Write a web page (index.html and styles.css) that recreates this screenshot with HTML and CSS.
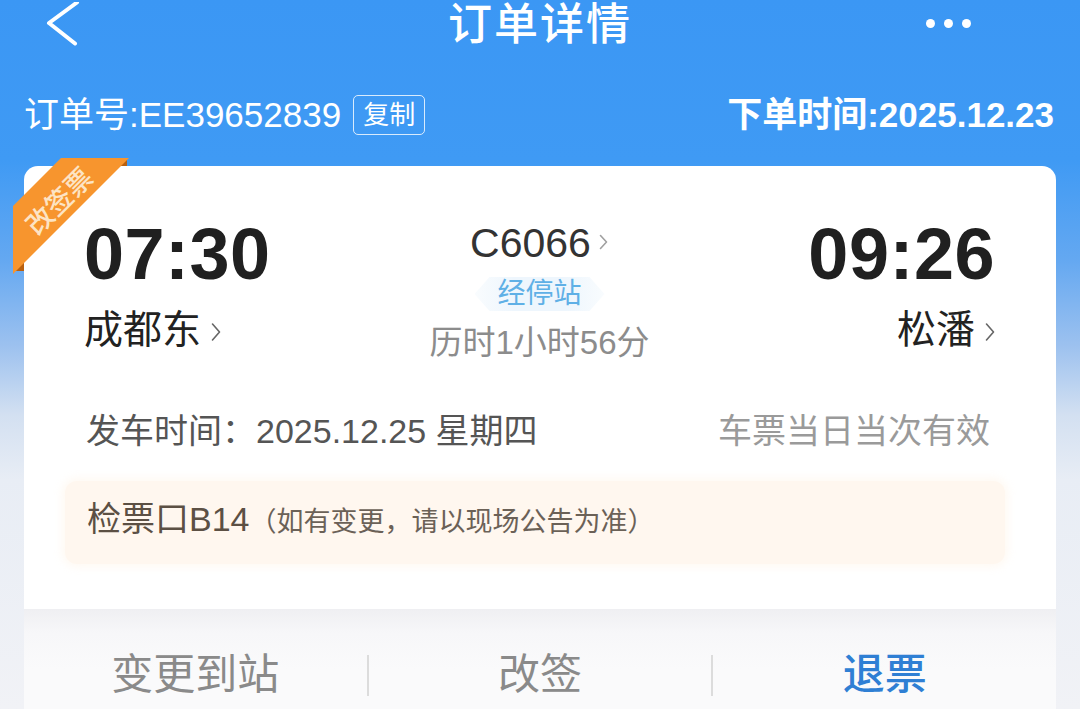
FILE: index.html
```html
<!DOCTYPE html>
<html lang="zh-CN">
<head>
<meta charset="utf-8">
<title>订单详情</title>
<link rel="stylesheet" href="styles.css">
</head>
<body>
<div class="page">
  <header class="nav">
    <div class="nav-left">
      <svg class="back" width="34" height="44" viewBox="0 0 34 44"><path d="M31 0.5 L3 21 L29 41.5" fill="none" stroke="#fff" stroke-width="4" stroke-linecap="round" stroke-linejoin="round"/></svg>
    </div>
    <h1 class="title">订单详情</h1>
    <div class="nav-right">
      <span class="dots"><i></i><i></i><i></i></span>
    </div>
  </header>

  <div class="order-row">
    <div class="order-no">订单号:EE39652839<span class="copy">复制</span></div>
    <div class="order-time">下单时间:2025.12.23</div>
  </div>

  <section class="card">
    <svg class="ribbon" width="130" height="125" viewBox="0 0 130 125">
      <polygon points="106,10 115,2 115,10" fill="#b9600f"/>
      <polygon points="1,115 12,104 12,115" fill="#b9600f"/>
      <polygon points="49,2 117,2 1,118 1,50" fill="#f7952e"/>
      <text x="46" y="44" transform="rotate(-45 46 44)" text-anchor="middle" dominant-baseline="central" class="ribbon-text">改签票</text>
    </svg>

    <div class="main">
      <div class="trip">
        <div class="end start">
          <div class="time">07:30</div>
          <div class="station">成都东<svg class="chev" width="10" height="20" viewBox="0 0 10 20"><path d="M1.5 2 L8.5 10 L1.5 18" fill="none" stroke="#666" stroke-width="1.6" stroke-linecap="round" stroke-linejoin="round"/></svg></div>
        </div>
        <div class="mid">
          <div class="train">C6066<svg class="chev-s" width="10" height="16" viewBox="0 0 10 16"><path d="M1.5 1.5 L7.5 8 L1.5 14.5" fill="none" stroke="#a0a0a0" stroke-width="1.6" stroke-linecap="round" stroke-linejoin="round"/></svg></div>
          <span class="stops">经停站</span>
          <div class="duration">历时1小时56分</div>
        </div>
        <div class="end arrive">
          <div class="time">09:26</div>
          <div class="station">松潘<svg class="chev" width="10" height="20" viewBox="0 0 10 20"><path d="M1.5 2 L8.5 10 L1.5 18" fill="none" stroke="#666" stroke-width="1.6" stroke-linecap="round" stroke-linejoin="round"/></svg></div>
        </div>
      </div>

      <div class="date-row">
        <div class="date">发车时间：2025.12.25 星期四</div>
        <div class="valid">车票当日当次有效</div>
      </div>

      <div class="check">
        <span class="gate">检票口B14</span><span class="note">（如有变更，请以现场公告为准）</span>
      </div>
    </div>

    <div class="actions">
      <div class="act">变更到站</div>
      <i class="sep"></i>
      <div class="act">改签</div>
      <i class="sep"></i>
      <div class="act refund">退票</div>
    </div>
  </section>
</div>
</body>
</html>
```

FILE: styles.css
```css
* { box-sizing: border-box; }

html, body {
  margin: 0;
  padding: 0;
  height: 100%;
  overflow: hidden;
}

body {
  font-family: "Liberation Sans", "Noto Sans CJK SC", sans-serif;
  background: linear-gradient(180deg,
    #3b97f4 0px,
    #3f9af4 160px,
    #64a8f1 260px,
    #9cc1ef 345px,
    #d3e0f1 415px,
    #e8edf5 480px,
    #f1f2f6 709px);
}

.page {
  width: 1080px;
  height: 709px;
}

/* ---------- nav ---------- */
.nav {
  display: grid;
  grid-template-columns: 1fr auto 1fr;
  align-items: center;
  height: 44px;
}

.nav-left {
  display: flex;
  align-items: center;
  padding-left: 46px;
}

.back { display: block; }

.title {
  margin: 0;
  padding-top: 3px;
  font-size: 44px;
  line-height: 44px;
  font-weight: 500;
  color: #fff;
  letter-spacing: 2px;
}

.nav-right {
  display: flex;
  justify-content: flex-end;
  padding-right: 109px;
}

.dots {
  display: flex;
  gap: 9px;
}

.dots i {
  display: block;
  width: 9px;
  height: 9px;
  border-radius: 50%;
  background: #fff;
}

/* ---------- order row ---------- */
.order-row {
  display: flex;
  justify-content: space-between;
  align-items: center;
  height: 40px;
  margin-top: 51px;
  padding: 0 26px 0 24px;
  color: #fff;
}

.order-no {
  display: flex;
  align-items: center;
  gap: 12px;
  font-size: 35px;
  line-height: 40px;
}

.copy {
  display: inline-block;
  font-size: 26px;
  line-height: 38px;
  padding: 0 9px;
  border: 1.5px solid rgba(255, 255, 255, 0.8);
  border-radius: 5px;
}

.order-time {
  font-size: 35px;
  line-height: 40px;
  font-weight: 700;
}

/* ---------- card ---------- */
.card {
  position: relative;
  margin: 31px 24px 0;
  background: #fff;
  border-radius: 14px 14px 0 0;
}

.ribbon {
  position: absolute;
  left: -12px;
  top: -10px;
  overflow: visible;
}

.ribbon-text {
  font-family: "Noto Sans CJK SC", sans-serif;
  font-size: 27px;
  font-weight: 500;
  fill: #fde4c4;
}

.main {
  padding: 52px 0 45px;
}

.trip {
  display: grid;
  grid-template-columns: 1fr auto 1fr;
  align-items: start;
  padding: 0 61px 0 60px;
}

.time {
  font-size: 72px;
  line-height: 72px;
  font-weight: 700;
  color: #202020;
  letter-spacing: 0.5px;
}

.station {
  display: flex;
  align-items: center;
  margin-top: 17px;
  font-size: 39px;
  line-height: 46px;
  color: #222;
}

.station .chev {
  margin-left: 10px;
  margin-top: 3px;
}

.arrive {
  text-align: right;
}

.arrive .station {
  justify-content: flex-end;
}

.mid {
  display: flex;
  flex-direction: column;
  align-items: center;
}

.train {
  display: flex;
  align-items: center;
  margin-top: 4px;
  font-size: 41px;
  line-height: 42px;
  color: #333;
}

.chev-s {
  margin-left: 8px;
  margin-top: -3px;
}

.stops {
  display: block;
  width: 130px;
  height: 34px;
  margin-top: 13px;
  font-size: 28px;
  line-height: 34px;
  text-align: center;
  color: #5fb0e6;
  background: linear-gradient(90deg, #f9fcfe 0%, #eef6fd 30%, #eef6fd 70%, #f9fcfe 100%);
  clip-path: polygon(15px 0, calc(100% - 15px) 0, 100% 50%, calc(100% - 15px) 100%, 15px 100%, 0 50%);
}

.duration {
  margin-top: 12px;
  font-size: 33px;
  line-height: 40px;
  color: #8c8c8c;
}

.date-row {
  display: flex;
  justify-content: space-between;
  margin-top: 48px;
  padding: 0 66px 0 62px;
  font-size: 34px;
  line-height: 40px;
}

.date { color: #555; }
.valid { color: #9a9a9a; }

.check {
  margin: 30px 51px 0 41px;
  padding: 18px 22px;
  line-height: 40px;
  background: #fff7ef;
  border-radius: 12px;
  box-shadow: 0 0 8px 3px rgba(255, 247, 239, 0.8);
}

.gate {
  font-size: 34px;
  color: #5c5044;
}

.note {
  font-size: 27px;
  color: #6b6157;
}

/* ---------- actions ---------- */
.actions {
  display: grid;
  grid-template-columns: 1fr 2px 1fr 2px 1fr;
  align-items: center;
  padding: 41px 0 40px;
  background: linear-gradient(180deg, #efeff2 0px, #f7f7f9 24px, #fafafb 60px);
}

.act {
  text-align: center;
  font-size: 42px;
  line-height: 50px;
  color: #8a8a8a;
}

.act.refund {
  color: #2f7fd4;
  font-weight: 500;
}

.sep {
  display: block;
  width: 2px;
  height: 41px;
  background: #dcdcdc;
}
```
